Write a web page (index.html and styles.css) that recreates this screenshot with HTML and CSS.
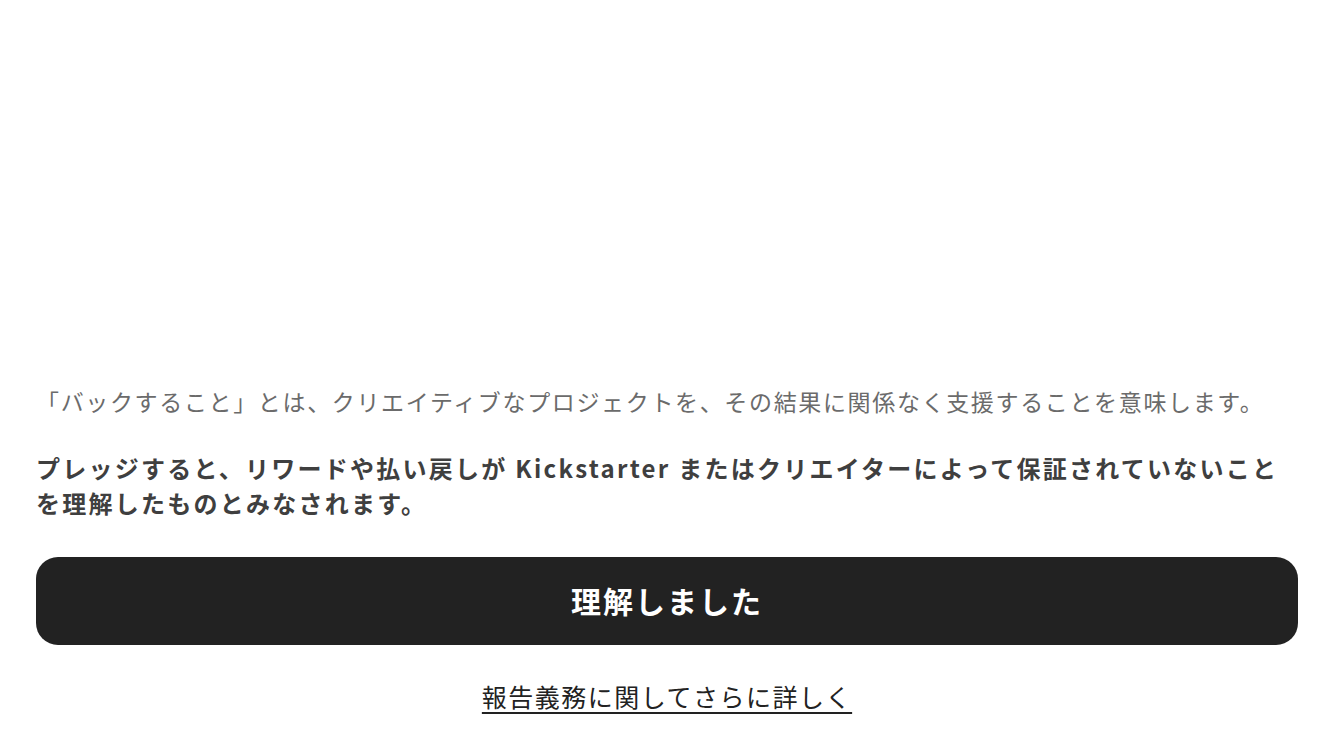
FILE: index.html
```html
<!DOCTYPE html>
<html lang="ja">
<head>
<meta charset="utf-8">
<link rel="stylesheet" href="styles.css">
</head>
<body>
<main class="sheet">
  <p class="intro">「バックすること」とは、クリエイティブなプロジェクトを、その結果に関係なく支援することを意味します。</p>
  <p class="notice">プレッジすると、リワードや払い戻しが Kickstarter またはクリエイターによって保証されていないことを理解したものとみなされます。</p>
  <button class="confirm" type="button">理解しました</button>
  <div class="more"><a href="#" class="more-link">報告義務に関してさらに詳しく</a></div>
</main>
</body>
</html>
```
FILE: styles.css
```css
html, body {
  margin: 0;
  padding: 0;
  background: #ffffff;
}
body {
  font-family: "Noto Sans CJK JP", "Noto Sans", sans-serif;
}
.sheet {
  height: 750px;
  box-sizing: border-box;
  padding: 384px 36px 0 36px;
  display: flex;
  flex-direction: column;
}
.intro {
  margin: 0;
  font-size: 23px;
  line-height: 34px;
  letter-spacing: 1.65px;
  color: #6b6b6b;
  white-space: nowrap;
}
.notice {
  margin: 32px 0 0 0;
  font-size: 24px;
  line-height: 35px;
  font-weight: 700;
  letter-spacing: 2.25px;
  color: #3f3f3f;
}
.confirm {
  margin-top: 37px;
  height: 88px;
  border: none;
  border-radius: 22px;
  background: #222222;
  color: #ffffff;
  font-family: inherit;
  font-size: 30px;
  font-weight: 700;
  letter-spacing: 2px;
  padding: 0 0 2px 0;
}
.more {
  margin-top: 34px;
  text-align: center;
  line-height: 34px;
}
.more-link {
  font-size: 25px;
  letter-spacing: 1.5px;
  color: #222222;
  text-decoration: underline;
  text-underline-offset: 5px;
}
```
